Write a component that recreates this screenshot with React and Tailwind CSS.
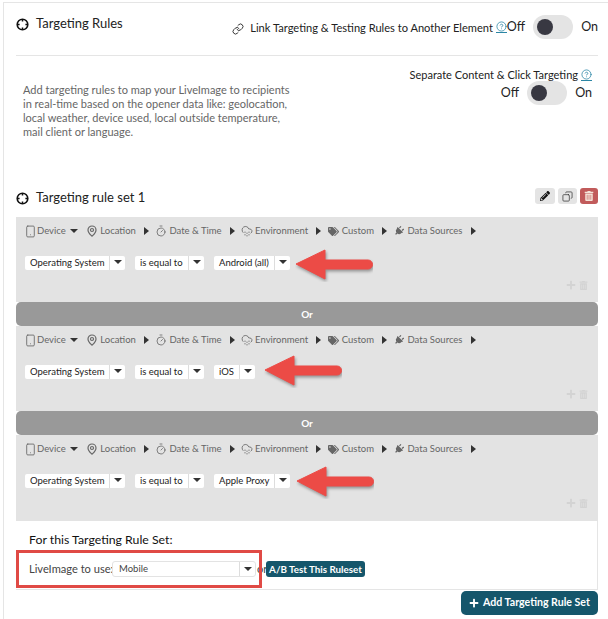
import { Link, Smartphone, MapPin, Timer, CloudDrizzle, Copy, CircleHelp } from "lucide-react";
import { FaTags, FaPlug, FaTrashAlt, FaPlus, FaPencilAlt } from "react-icons/fa";

const RULES = [
  { value: "Android (all)", valueWidth: "w-[76px]", arrow: "left-[295px] top-[248px] w-[78px]" },
  { value: "iOS", valueWidth: "w-[41px]", arrow: "left-[264px] top-[354px] w-[78px]" },
  { value: "Apple Proxy", valueWidth: "w-[76px]", arrow: "left-[296px] top-[465px] w-[78px]" },
];

// crosshair-in-a-circle used next to the section titles
function TargetIcon() {
  return (
    <svg width="13" height="13" viewBox="0 0 13 13" className="shrink-0">
      <circle cx="6.5" cy="6.5" r="5.3" fill="none" stroke="#111" strokeWidth="1.6" />
      <path d="M6.5 1v2.6M6.5 9.4V12M1 6.5h2.6M9.4 6.5H12" stroke="#111" strokeWidth="1.5" />
    </svg>
  );
}

function Help() {
  return (
    <span className="inline-flex border-b border-[#2b86a5] ml-[3px] h-[12px]">
      <CircleHelp size={11} strokeWidth={1.7} className="text-[#2b86a5]" />
    </span>
  );
}

function Toggle() {
  return (
    <div className="w-10 h-6 rounded-full bg-[#e4e4e4] flex items-center pl-1">
      <div className="w-4 h-4 rounded-full bg-[#383842]" />
    </div>
  );
}

function Caret({ right }) {
  return (
    <span
      className={`${right ? "border-l-[5px] border-y-[4px] border-y-transparent border-l-[#333]" : "border-t-[4px] border-x-[4px] border-x-transparent border-t-[#333]"} inline-block w-0 h-0`}
    />
  );
}

function Crumb({ icon, label, open }) {
  return (
    <div className="flex items-center">
      {icon}
      <span className={`ml-[2px] ${open ? "mr-[4px]" : "mr-[8px]"}`}>{label}</span>
      <Caret right={!open} />
    </div>
  );
}

function Select({ label, width }) {
  return (
    <div className={`${width} h-[14px] bg-white rounded-[2px] flex items-center justify-between pl-[5px] text-[9.5px] text-[#222] whitespace-nowrap`}>
      <span>{label}</span>
      <span className="w-[16px] h-full border-l border-[#ddd] flex items-center justify-center pb-[2px]">
        <Caret />
      </span>
    </div>
  );
}

function RulePanel({ value, valueWidth, tall }) {
  return (
    <div className={`${tall ? "h-[86px]" : "h-[85px]"} bg-[#e3e3e3] pl-[9px] pr-[10px] pt-[9px]`}>
      <div className="flex items-center gap-[6.5px] h-[10px] text-[9.5px] text-[#666] whitespace-nowrap">
        <Crumb open label="Device" icon={<Smartphone size={13} strokeWidth={1.6} className="-ml-[1px] -mr-[2px]" />} />
        <Crumb label="Location" icon={<MapPin size={12} strokeWidth={2.4} className="ml-[2px]" />} />
        <Crumb label="Date & Time" icon={<Timer size={12} strokeWidth={1.6} />} />
        <Crumb label="Environment" icon={<CloudDrizzle size={12} strokeWidth={1.7} />} />
        <Crumb label="Custom" icon={<FaTags size={11} className="mr-px" />} />
        <Crumb label="Data Sources" icon={<FaPlug size={10} className="rotate-45 mr-[2px]" />} />
      </div>
      <div className="flex gap-[10px] mt-[20px]">
        <Select label="Operating System" width="w-[100px]" />
        <Select label="is equal to" width="w-[69px]" />
        <Select label={value} width={valueWidth} />
      </div>
      <div className="flex items-center justify-end gap-[3px] mt-[10px] text-[#d3d3d3]">
        <FaPlus size={10} />
        <FaTrashAlt size={9} />
      </div>
    </div>
  );
}

function OrBar() {
  return (
    <div className="h-6 bg-[#999] rounded-[5px] flex items-center justify-center text-[10px] font-bold text-white">
      Or
    </div>
  );
}

function Arrow({ className }) {
  return (
    <svg viewBox="0 0 78 34" className={`absolute h-[34px] ${className}`}>
      <path
        d="M1 16 L30 2 V12 H73 a4.5 4.5 0 0 1 0 9 H30 V31 Z"
        fill="#ec4b46"
        stroke="#ec4b46"
        strokeLinejoin="round"
        style={{ filter: "drop-shadow(1px 2px 1.5px rgba(0,0,0,0.35))" }}
      />
    </svg>
  );
}

export default function App() {
  return (
    <div className="relative w-[608px] h-[619px] overflow-hidden bg-white pt-[2px] font-['Lato',sans-serif] text-[#222]">
      <div className="ml-[3px] h-full border-l border-t border-[#e5e5e5] pl-[12px] pr-[10px]">
        {/* Section header */}
        <div className="h-[53px] border-b border-[#e5e5e5] flex justify-between">
          <div className="flex items-center gap-[7px] h-[18px] mt-[12px] text-[13px] text-[#222]">
            <TargetIcon />
            Targeting Rules
          </div>
          <div className="flex items-center h-6 mt-[12px] text-[11.1px] whitespace-nowrap">
            <Link size={12} strokeWidth={1.8} className="mr-[6px] mt-[3px]" />
            <span className="mt-[3px]">Link Targeting &amp; Testing Rules to Another Element</span>
            <Help />
            <span className="text-[12.5px] mr-[8px]">Off</span>
            <Toggle />
            <span className="text-[12.5px] ml-[8px]">On</span>
          </div>
        </div>

        {/* Description and content/click toggle */}
        <div className="h-[131px] flex justify-between">
          <p className="w-[285px] ml-[7px] mt-[27px] text-[11px] leading-[14px] text-[#666]">
            Add targeting rules to map your LiveImage to recipients<br />
            in real-time based on the opener data like: geolocation,<br />
            local weather, device used, local outside temperature,<br />
            mail client or language.
          </p>
          <div className="flex flex-col items-end pr-[6px] pt-[13px]">
            <div className="flex items-center h-[12px] text-[11px] whitespace-nowrap">
              Separate Content &amp; Click Targeting
              <Help />
            </div>
            <div className="flex items-center text-[12.5px]">
              <span className="mr-[8px]">Off</span>
              <Toggle />
              <span className="ml-[8px]">On</span>
            </div>
          </div>
        </div>

        {/* Rule set title and actions */}
        <div className="h-[24px] flex items-start justify-between">
          <div className="flex items-center gap-[7px] h-[18px] mt-[2px] text-[13px]">
            <TargetIcon />
            Targeting rule set 1
          </div>
          <div className="flex gap-[3px] mt-[1px]">
            <div className="w-5 h-4 rounded-[3px] bg-[#e4e4e4] flex items-center justify-center">
              <FaPencilAlt size={10} className="text-[#111]" />
            </div>
            <div className="w-[19px] h-4 rounded-[3px] bg-[#e4e4e4] flex items-center justify-center">
              <Copy size={11} strokeWidth={1.6} className="text-[#333] -scale-x-100" />
            </div>
            <div className="w-[18px] h-4 rounded-[3px] bg-[#c15b5b] flex items-center justify-center">
              <FaTrashAlt size={10} className="text-[#f4e3d8]" />
            </div>
          </div>
        </div>

        {/* Rule panels */}
        <div className="mt-[6px]">
          {RULES.map((rule, i) => (
            <div key={rule.value}>
              {i > 0 && <OrBar />}
              <RulePanel value={rule.value} valueWidth={rule.valueWidth} tall={i === RULES.length - 1} />
            </div>
          ))}
        </div>

        {/* Per rule set LiveImage choice */}
        <div className="h-[69px] border-r border-b border-[#e5e5e5] pl-[13px] pt-[10px]">
          <div className="h-[18px] flex items-center text-[12.3px] text-[#111]">For this Targeting Rule Set:</div>
          <div className="flex items-center mt-[12px] text-[11.1px] text-[#444] whitespace-nowrap">
            <span className="w-[83px]">LiveImage to use:</span>
            <div className="w-[144px] h-4 border border-[#e3e3e3] rounded-[3px] flex items-center justify-between pl-[6px] text-[9.5px]">
              <span>Mobile</span>
              <span className="w-[16px] h-full border-l border-[#ddd] flex items-center justify-center">
                <Caret />
              </span>
            </div>
            <span className="w-[10px] pl-[1px]">or</span>
            <div className="w-[99px] h-4 rounded-[3px] bg-[#15566b] flex items-center justify-center text-[9.8px] font-bold text-white">
              A/B Test This Ruleset
            </div>
          </div>
        </div>

        <div className="flex justify-end mt-px">
          <div className="w-[137px] h-6 rounded-[5px] bg-[#15566b] flex items-center justify-center gap-[4px] text-[10.6px] font-bold text-white whitespace-nowrap">
            <FaPlus size={10} />
            Add Targeting Rule Set
          </div>
        </div>
      </div>

      {/* Annotations drawn over the screenshot */}
      {RULES.map((rule) => (
        <Arrow key={rule.value} className={rule.arrow} />
      ))}
      <div className="absolute left-[16px] top-[550px] w-[246px] h-[38px] border-[3px] border-[#e04a45]" />
    </div>
  );
}
